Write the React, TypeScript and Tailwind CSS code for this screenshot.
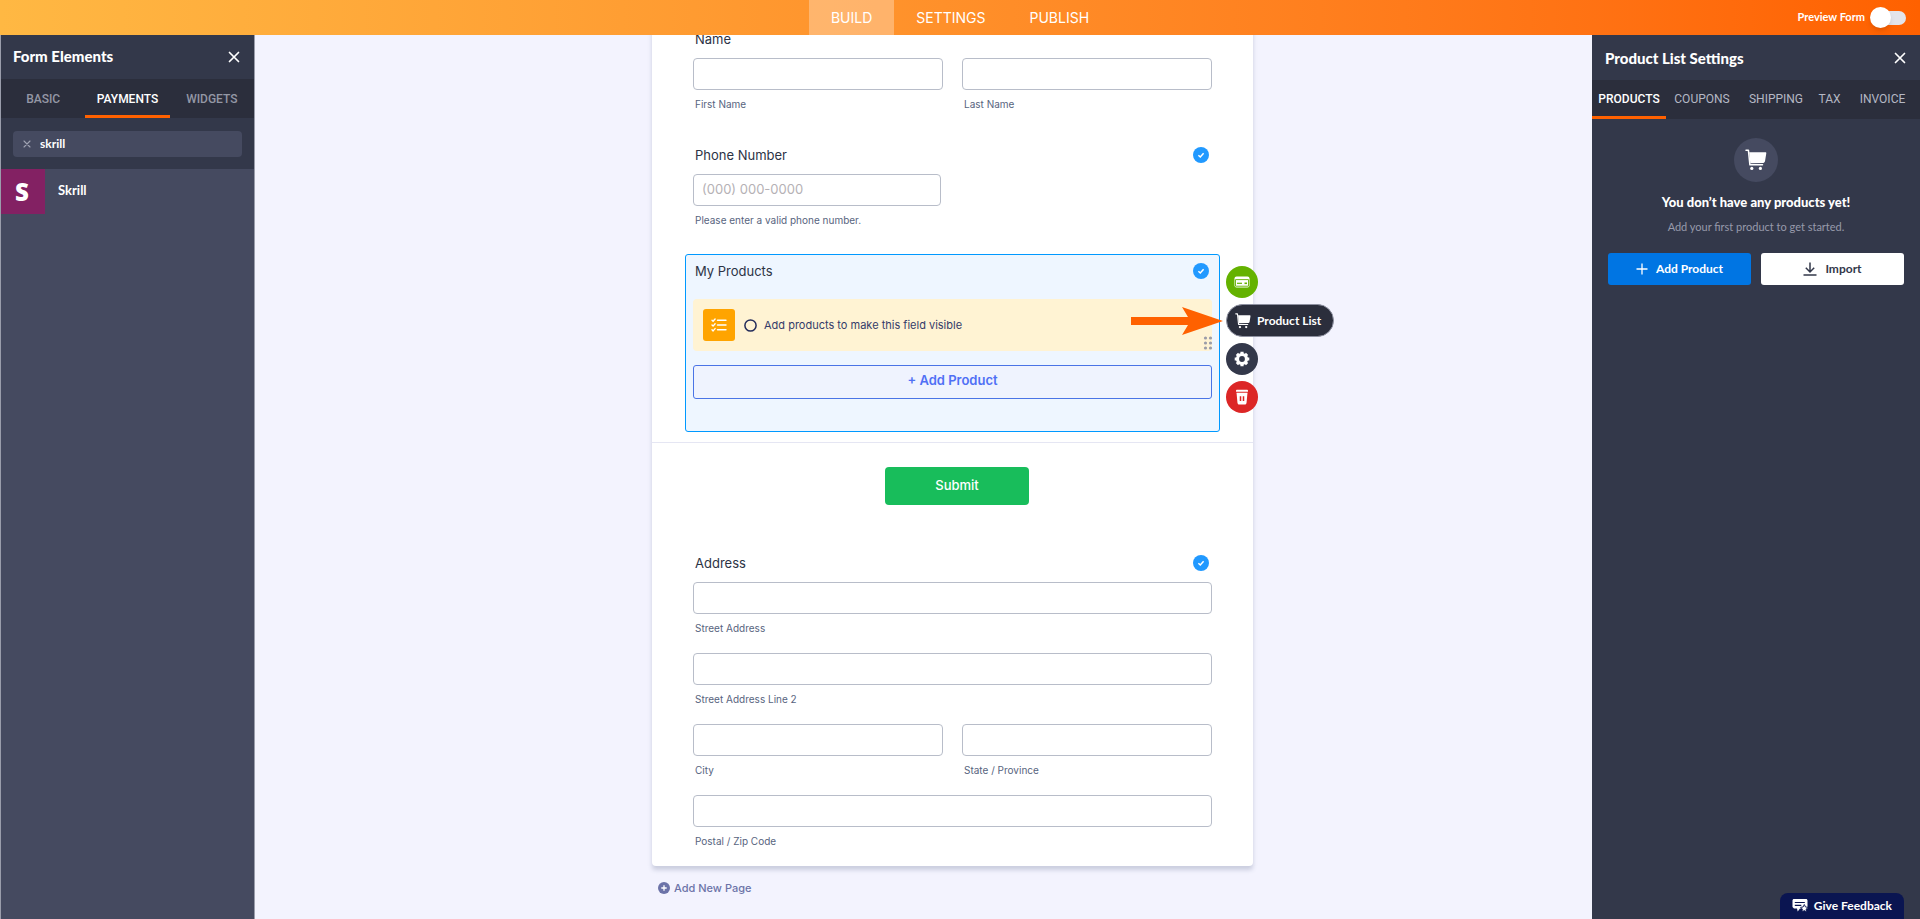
import { useState } from "react";
import type { ReactNode } from "react";
import { clsx } from "clsx";

const INPUT =
  "block h-8 w-full rounded border border-[#b8bdc9] bg-white px-2 pb-[2px] text-[13px] text-[#2c3345] placeholder:text-[#b5b1b5] focus:outline-none focus:border-[#0099ff]";

function CloseIcon({ className }: { className?: string }) {
  return (
    <svg viewBox="0 0 12 12" className={className} fill="none" stroke="currentColor">
      <path d="M1.5 1.5l9 9M10.5 1.5l-9 9" strokeWidth="1.7" strokeLinecap="round" />
    </svg>
  );
}

function CartIcon({ className }: { className?: string }) {
  return (
    <svg viewBox="0 0 22 22" className={className} fill="currentColor">
      <path
        d="M1 1.2h2.4l1.5 14.6h12.6"
        fill="none"
        stroke="currentColor"
        strokeWidth="1.5"
        strokeLinecap="round"
        strokeLinejoin="round"
      />
      <path d="M4.2 3.2h16.3c.6 0 .9.5.8 1.1l-1.3 8c-.2.9-.8 1.5-1.7 1.6L5.3 14.2z" />
      <circle cx="6.8" cy="19.4" r="1.6" />
      <circle cx="15.4" cy="19.4" r="1.6" />
    </svg>
  );
}

function CardIcon() {
  return (
    <svg viewBox="0 0 16 12" className="h-3 w-4">
      <rect x="0.5" y="0.5" width="15" height="11" rx="2" fill="white" />
      <path d="M1.5 3.6h13v6.6h-13z" fill="none" stroke="#64b200" strokeWidth="0.9" />
      <path d="M3 7.3h5" stroke="#64b200" strokeWidth="1.2" />
      <path d="M10.5 7.3H13" stroke="#64b200" strokeWidth="1.6" />
    </svg>
  );
}

function GearIcon() {
  return (
    <svg viewBox="0 0 16 16" className="h-4 w-4">
      <circle cx="8" cy="8" r="4.5" fill="none" stroke="white" strokeWidth="3.2" />
      <g stroke="white" strokeWidth="3.2">
        <path d="M8 .7v3M8 12.3v3M.7 8h3M12.3 8h3M2.9 2.9l2 2M11.1 11.1l2 2M13.1 2.9l-2 2M4.9 11.1l-2 2" />
      </g>
    </svg>
  );
}

function TrashIcon() {
  return (
    <svg viewBox="0 0 14 16" className="h-4 w-[14px]" fill="white">
      <path d="M1.8.8h10.4c.5 0 .8.3.8.7v1.3H1V1.5c0-.4.3-.7.8-.7z" />
      <path d="M1.5 3.8h11l-1 10.2c-.1.9-.7 1.5-1.6 1.5H4.1c-.9 0-1.5-.6-1.6-1.5z" />
      <path d="M5.5 7.3v4.6M8.5 7.3v4.6" stroke="#dc2626" strokeWidth="1.5" />
    </svg>
  );
}

function ChecklistIcon() {
  return (
    <svg viewBox="0 0 16 14" className="h-[14px] w-4" fill="none" stroke="white">
      <path d="M6.5 2.2H15M6.5 7H15M6.5 11.8H15" strokeWidth="1.4" strokeLinecap="round" />
      <path
        d="M1 2.2l1.1 1.1 2-2.3M1 7l1.1 1.1 2-2.3M1 11.8l1.1 1.1 2-2.3"
        strokeWidth="1.4"
        strokeLinecap="round"
        strokeLinejoin="round"
      />
    </svg>
  );
}

function FeedbackIcon() {
  return (
    <svg viewBox="0 0 16 14" className="h-[14px] w-4">
      <path d="M2 0h12c.9 0 1.5.6 1.5 1.5v8H8l-2.3 3-.7-3H2L.5 8V1.5C.5.6 1.1 0 2 0z" fill="white" />
      <path d="M2.8 3.5h10M2.8 6.3h6.5" stroke="#0a1551" strokeWidth="1.2" />
      <path
        d="M12.3 5.5l1.2 2.5 2.5.3-1.8 1.9.5 2.7-2.4-1.3-2.4 1.3.5-2.7-1.8-1.9 2.5-.3z"
        fill="white"
        stroke="#0a1551"
        strokeWidth="0.9"
      />
    </svg>
  );
}

function CheckBadge() {
  return (
    <svg viewBox="0 0 16 16" className="h-4 w-4">
      <circle cx="8" cy="8" r="8" fill="#2199ff" />
      <path d="M5.4 8.2l1.9 1.8 3.3-3.7" fill="none" stroke="white" strokeWidth="1.5" />
    </svg>
  );
}

function QuestionLabel({ children, checked }: { children: ReactNode; checked?: boolean }) {
  return (
    <div className="flex h-4 items-center justify-between pl-[2px] pr-[3px]">
      <h3 className="pb-px text-[13px] leading-4 text-[#2c3345]">{children}</h3>
      {checked && <CheckBadge />}
    </div>
  );
}

function Field({ id, label, placeholder }: { id: string; label: string; placeholder?: string }) {
  return (
    <div className="pb-px">
      <input id={id} type="text" placeholder={placeholder} className={INPUT} />
      <label htmlFor={id} className="mt-[6px] block pl-[2px] text-[10px] leading-4 text-[#57647e]">
        {label}
      </label>
    </div>
  );
}

function TopBar() {
  return (
    <header className="grid h-[35px] shrink-0 grid-cols-[1fr_auto_1fr] bg-linear-to-r from-[#ffb843] to-[#ff6100] text-white">
      <nav className="col-start-2 flex text-sm">
        <a href="#build" className="flex items-center bg-white/30 px-[22px]">BUILD</a>
        <a href="#settings" className="flex items-center px-[22px]">SETTINGS</a>
        <a href="#publish" className="flex items-center px-[22px]">PUBLISH</a>
      </nav>
      <label className="flex items-center justify-end gap-[7px] pr-[14px] font-[Lato] text-[11px] font-bold">
        Preview Form
        <input
          type="checkbox"
          role="switch"
          className="flex h-[14px] w-[34px] appearance-none items-center rounded-full bg-[#e3e4ea] before:-ml-[2px] before:h-[21px] before:w-[21px] before:shrink-0 before:rounded-full before:bg-white before:shadow-md"
        />
      </label>
    </header>
  );
}

function ElementsPanel() {
  const [tab, setTab] = useState("PAYMENTS");
  const [query, setQuery] = useState("skrill");

  return (
    <aside className="w-[255px] shrink-0 border-x border-[#9a9dab] bg-[#454a60] text-white">
      <div className="flex h-11 items-center justify-between bg-[#33384a] pl-3 pr-[14px]">
        <h2 className="pb-[2px] font-[Lato] text-[15px] font-black">Form Elements</h2>
        <button aria-label="Close form elements">
          <CloseIcon className="h-3 w-3" />
        </button>
      </div>
      <div className="grid h-[39px] grid-cols-3 bg-[#2b2e3c] font-[Roboto] text-xs font-medium">
        {["BASIC", "PAYMENTS", "WIDGETS"].map((name) => (
          <button
            key={name}
            onClick={() => setTab(name)}
            className={clsx(
              "border-b-3 pt-[3px]",
              tab === name ? "border-[#ff6100] text-white" : "border-transparent text-[#9497a5]"
            )}
          >
            {name}
          </button>
        ))}
      </div>
      <div className="bg-[#33384a] px-3 pt-[13px] pb-3">
        <div className="flex h-[26px] items-center gap-[9px] rounded bg-[#454a60] pl-[10px]">
          <button aria-label="Clear search" onClick={() => setQuery("")}>
            <CloseIcon className="h-2 w-2 text-[#a0a3b2]" />
          </button>
          <input
            aria-label="Search form elements"
            value={query}
            onChange={(e) => setQuery(e.target.value)}
            className="min-w-0 flex-1 font-[Lato] text-xs font-bold focus:outline-none"
          />
        </div>
      </div>
      <button className="flex w-full items-center gap-[13px] text-left font-[Lato] text-[13px] font-bold">
        <span className="flex h-[45px] w-11 items-center justify-center bg-[#832163] pr-[2px] font-['Noto_Sans'] text-2xl font-black">
          S
        </span>
        <span className="pb-[2px]">Skrill</span>
      </button>
    </aside>
  );
}

function FieldActions() {
  return (
    <div className="absolute top-[11px] left-[540px] flex flex-col items-start gap-[6px]">
      <button aria-label="Payment settings" className="flex h-8 w-8 items-center justify-center rounded-full bg-[#64b200]">
        <CardIcon />
      </button>
      <button className="flex h-[33px] items-center gap-[6px] rounded-full border border-[#8d90a0] bg-[#2b2e3c] pl-2 pr-3 font-[Lato] text-xs font-bold whitespace-nowrap text-white">
        <CartIcon className="h-4 w-4" />
        Product List
      </button>
      <button aria-label="Properties" className="flex h-8 w-8 items-center justify-center rounded-full bg-[#33384a]">
        <GearIcon />
      </button>
      <button aria-label="Delete" className="flex h-8 w-8 items-center justify-center rounded-full bg-[#dc2626]">
        <TrashIcon />
      </button>
    </div>
  );
}

function ProductsField() {
  return (
    <section className="relative mx-[33px] mt-[25px] rounded-[3px] border border-[#0099ff] bg-[#eef6ff] px-[7px] pt-2 pb-8">
      <QuestionLabel checked>My Products</QuestionLabel>
      <div className="mt-5 flex h-[52px] items-center rounded bg-[#fff3d3] pl-[10px]">
        <span className="flex h-8 w-8 items-center justify-center rounded-[3px] bg-[#ffa400]">
          <ChecklistIcon />
        </span>
        <svg viewBox="0 0 13 13" className="ml-[9px] h-[13px] w-[13px]">
          <circle cx="6.5" cy="6.5" r="5.6" fill="none" stroke="#252d5b" strokeWidth="1.5" />
        </svg>
        <span className="ml-[7px] text-[11px] text-[#343c6a]">Add products to make this field visible</span>
      </div>
      <button className="mt-[14px] flex h-[34px] w-full items-center justify-center rounded-[3px] border border-[#4a74e6] bg-[#eff3fe] pb-[3px] text-[13px] font-semibold text-[#4f70f5]">
        + Add Product
      </button>
      <svg viewBox="0 0 10 14" className="absolute top-[81px] right-[6px] h-[14px] w-[10px]" fill="#9b9ca8">
        <circle cx="2.5" cy="2" r="1.6" />
        <circle cx="7.5" cy="2" r="1.6" />
        <circle cx="2.5" cy="7" r="1.6" />
        <circle cx="7.5" cy="7" r="1.6" />
        <circle cx="2.5" cy="12" r="1.6" />
        <circle cx="7.5" cy="12" r="1.6" />
      </svg>
      <svg viewBox="0 0 92 28" className="absolute top-[52px] left-[445px] h-7 w-[92px]" fill="#ff6100">
        <path d="M0 10h57L51 0l41 14-41 14 6-10H0z" />
      </svg>
      <FieldActions />
    </section>
  );
}

function FormCanvas() {
  return (
    <main className="flex min-w-0 flex-1 flex-col items-center overflow-hidden bg-[#f3f3fe] pl-[58px]">
      <div className="w-full max-w-[601px] shrink-0">
        <form className="-mt-6 rounded bg-white pt-5 shadow-[0_4px_4px_rgba(84,95,130,0.25)]">
          <section className="px-[41px]">
            <QuestionLabel>Name</QuestionLabel>
            <div className="mt-[11px] grid grid-cols-2 gap-[19px]">
              <Field id="first" label="First Name" />
              <Field id="last" label="Last Name" />
            </div>
          </section>
          <section className="mt-[34px] px-[41px]">
            <QuestionLabel checked>Phone Number</QuestionLabel>
            <div className="mt-[11px] max-w-[248px]">
              <Field id="phone" label="Please enter a valid phone number." placeholder="(000) 000-0000" />
            </div>
          </section>
          <ProductsField />
          <div className="mt-[10px] flex justify-center border-t border-[#e5e6f3] pt-6 pl-[9px]">
            <button type="button" className="h-[38px] w-36 rounded bg-[#18bd5b] text-[13px] font-medium text-white">
              Submit
            </button>
          </div>
          <section className="mt-[50px] px-[41px] pb-4">
            <QuestionLabel checked>Address</QuestionLabel>
            <div className="mt-[11px] space-y-4">
              <Field id="street" label="Street Address" />
              <Field id="street2" label="Street Address Line 2" />
              <div className="grid grid-cols-2 gap-[19px]">
                <Field id="city" label="City" />
                <Field id="state" label="State / Province" />
              </div>
              <Field id="zip" label="Postal / Zip Code" />
            </div>
          </section>
        </form>
        <button className="mt-[14px] ml-[6px] flex items-center gap-1 text-[11px] leading-4 font-medium text-[#6c73a8]">
          <svg viewBox="0 0 12 12" className="h-3 w-3">
            <circle cx="6" cy="6" r="6" fill="#6c73a8" />
            <path d="M6 3.3v5.4M3.3 6h5.4" stroke="white" strokeWidth="1.3" />
          </svg>
          Add New Page
        </button>
      </div>
    </main>
  );
}

function SettingsPanel() {
  const [tab, setTab] = useState("PRODUCTS");

  return (
    <aside className="flex w-[328px] shrink-0 flex-col bg-[#33384a] font-[Lato] text-white">
      <div className="flex h-[45px] shrink-0 items-center justify-between pl-[13px] pr-[14px]">
        <h2 className="pt-[2px] text-[15px] font-black">Product List Settings</h2>
        <button aria-label="Close settings">
          <CloseIcon className="h-3 w-3" />
        </button>
      </div>
      <div className="grid h-[39px] shrink-0 grid-cols-[74fr_72fr_76fr_31fr_75fr] bg-[#2b2e3c] font-[Roboto] text-xs">
        {["PRODUCTS", "COUPONS", "SHIPPING", "TAX", "INVOICE"].map((name) => (
          <button
            key={name}
            onClick={() => setTab(name)}
            className={clsx(
              "border-b-3 pt-[2px]",
              tab === name ? "border-[#ff6100] font-medium text-white" : "border-transparent text-[#b5b8c4]"
            )}
          >
            {name}
          </button>
        ))}
      </div>
      <div className="flex flex-col items-center px-4 pt-[19px]">
        <span className="flex h-11 w-11 items-center justify-center rounded-full bg-[#454a60]">
          <CartIcon className="h-[22px] w-[22px]" />
        </span>
        <p className="mt-[12px] text-[13px] leading-4 font-black">You don’t have any products yet!</p>
        <p className="mt-[9px] text-[11px] leading-4 text-[#979aaa]">Add your first product to get started.</p>
        <div className="mt-[18px] grid w-full grid-cols-2 gap-[10px] text-xs font-bold">
          <button className="flex h-8 items-center justify-center gap-2 rounded-[3px] bg-[#0075e3]">
            <svg viewBox="0 0 12 12" className="h-3 w-3" stroke="currentColor" strokeWidth="1.3">
              <path d="M6 .5v11M.5 6h11" />
            </svg>
            Add Product
          </button>
          <button className="flex h-8 items-center justify-center gap-2 rounded-[3px] bg-white text-[#33384a]">
            <svg viewBox="0 0 14 14" className="h-[14px] w-[14px]" fill="none" stroke="currentColor" strokeWidth="1.5">
              <path d="M7 .5v9M2.8 5.8L7 10l4.2-4.2M.5 13h13" />
            </svg>
            Import
          </button>
        </div>
      </div>
      <button className="mt-auto mr-4 flex h-[26px] shrink-0 items-center justify-center gap-[6px] self-end rounded-t-lg bg-[#0a1551] px-3 text-xs font-bold">
        <FeedbackIcon />
        Give Feedback
      </button>
    </aside>
  );
}

export default function App() {
  return (
    <div className="flex h-screen flex-col overflow-hidden font-['Inter',sans-serif]">
      <TopBar />
      <div className="flex min-h-0 flex-1">
        <ElementsPanel />
        <FormCanvas />
        <SettingsPanel />
      </div>
    </div>
  );
}
